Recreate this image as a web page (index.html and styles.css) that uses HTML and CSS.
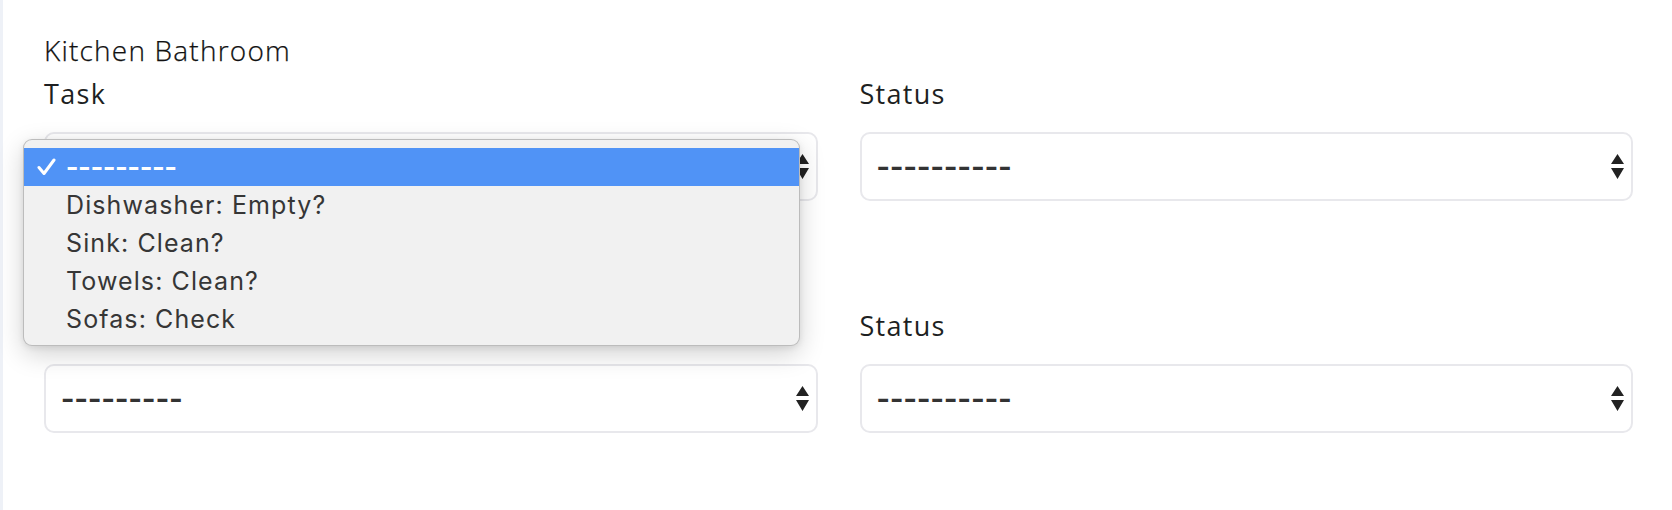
FILE: index.html
```html
<!DOCTYPE html>
<html lang="en">
<head>
<meta charset="utf-8">
<title>Kitchen Bathroom</title>
<link rel="stylesheet" href="styles.css">
</head>
<body>
<div class="page">
  <div class="section-title">Kitchen Bathroom</div>
  <div class="row">
    <div class="field">
      <label class="label">Task</label>
      <div class="select">
        <span class="value">---------</span>
        <svg class="arrows" width="13" height="25" viewBox="0 0 13 25"><path d="M6.5 0 L13 10 L0 10 Z M0 14 L13 14 L6.5 25 Z" fill="#222"/></svg>
      </div>
    </div>
    <div class="field">
      <label class="label">Status</label>
      <div class="select">
        <span class="value">----------</span>
        <svg class="arrows" width="13" height="25" viewBox="0 0 13 25"><path d="M6.5 0 L13 10 L0 10 Z M0 14 L13 14 L6.5 25 Z" fill="#222"/></svg>
      </div>
    </div>
  </div>
  <div class="row row-next">
    <div class="field">
      <label class="label">Task</label>
      <div class="select">
        <span class="value">---------</span>
        <svg class="arrows" width="13" height="25" viewBox="0 0 13 25"><path d="M6.5 0 L13 10 L0 10 Z M0 14 L13 14 L6.5 25 Z" fill="#222"/></svg>
      </div>
    </div>
    <div class="field">
      <label class="label">Status</label>
      <div class="select">
        <span class="value">----------</span>
        <svg class="arrows" width="13" height="25" viewBox="0 0 13 25"><path d="M6.5 0 L13 10 L0 10 Z M0 14 L13 14 L6.5 25 Z" fill="#222"/></svg>
      </div>
    </div>
  </div>

  <div class="menu">
    <div class="option selected">
      <svg class="check" width="19" height="18" viewBox="0 0 19 18"><path d="M2 9.5 L7 15.5 L17 2" fill="none" stroke="#fff" stroke-width="3" stroke-linecap="round" stroke-linejoin="round"/></svg>
      <span class="menu-dashes">---------</span>
    </div>
    <div class="option">Dishwasher: Empty?</div>
    <div class="option">Sink: Clean?</div>
    <div class="option">Towels: Clean?</div>
    <div class="option">Sofas: Check</div>
  </div>
</div>
</body>
</html>
```

FILE: styles.css
```css
* { box-sizing: border-box; }

html, body {
  margin: 0;
  padding: 0;
}

body {
  background: #eef1f7;
  font-family: "Open Sans", "Liberation Sans", sans-serif;
  color: #212529;
}

.page {
  position: relative;
  margin-left: 3px;
  min-height: 510px;
  background: #ffffff;
  padding: 29px 39px 0 41px;
}

.section-title {
  font-size: 28px;
  font-weight: 300;
  line-height: 43px;
  letter-spacing: 1.2px;
  color: #111;
  -webkit-text-stroke: 0.25px #111;
}

.row {
  display: grid;
  grid-template-columns: 1fr 1fr;
  column-gap: 42px;
}

.row-next {
  margin-top: 103px;
}

.label {
  display: block;
  font-size: 27px;
  font-weight: 400;
  line-height: 43px;
  letter-spacing: 1.3px;
  color: #1d1f22;
}

.select {
  margin-top: 17px;
  height: 69px;
  border: 2px solid #e8e8ec;
  border-radius: 10px;
  background: #fff;
  display: flex;
  align-items: center;
  justify-content: space-between;
  padding: 0 7px 0 15px;
}

.value {
  font-family: "Liberation Sans", sans-serif;
  font-size: 40px;
  line-height: 40px;
  height: 40px;
  color: #333;
  letter-spacing: 0.2px;
  position: relative;
  top: -2px;
}

.arrows {
  display: block;
}

.menu {
  position: absolute;
  left: 20px;
  top: 139px;
  width: 777px;
  height: 207px;
  background: #f1f1f1;
  border: 1px solid rgba(0, 0, 0, 0.22);
  border-radius: 9px;
  padding: 8px 0 7px;
  box-shadow: 0 8px 26px rgba(0, 0, 0, 0.18), 0 2px 6px rgba(0, 0, 0, 0.08);
  font-family: "Inter", "Liberation Sans", sans-serif;
}

.option {
  height: 38px;
  display: flex;
  align-items: center;
  padding-left: 42px;
  font-size: 25px;
  letter-spacing: 1.1px;
  color: #363636;
  position: relative;
}

.option.selected {
  background: #5093f6;
  color: #ffffff;
}

.check {
  position: absolute;
  left: 13px;
  top: 10px;
}

.menu-dashes {
  font-family: "Liberation Sans", sans-serif;
  font-size: 37px;
  line-height: 38px;
  height: 38px;
  letter-spacing: 0;
  position: relative;
  top: -1px;
}
```
